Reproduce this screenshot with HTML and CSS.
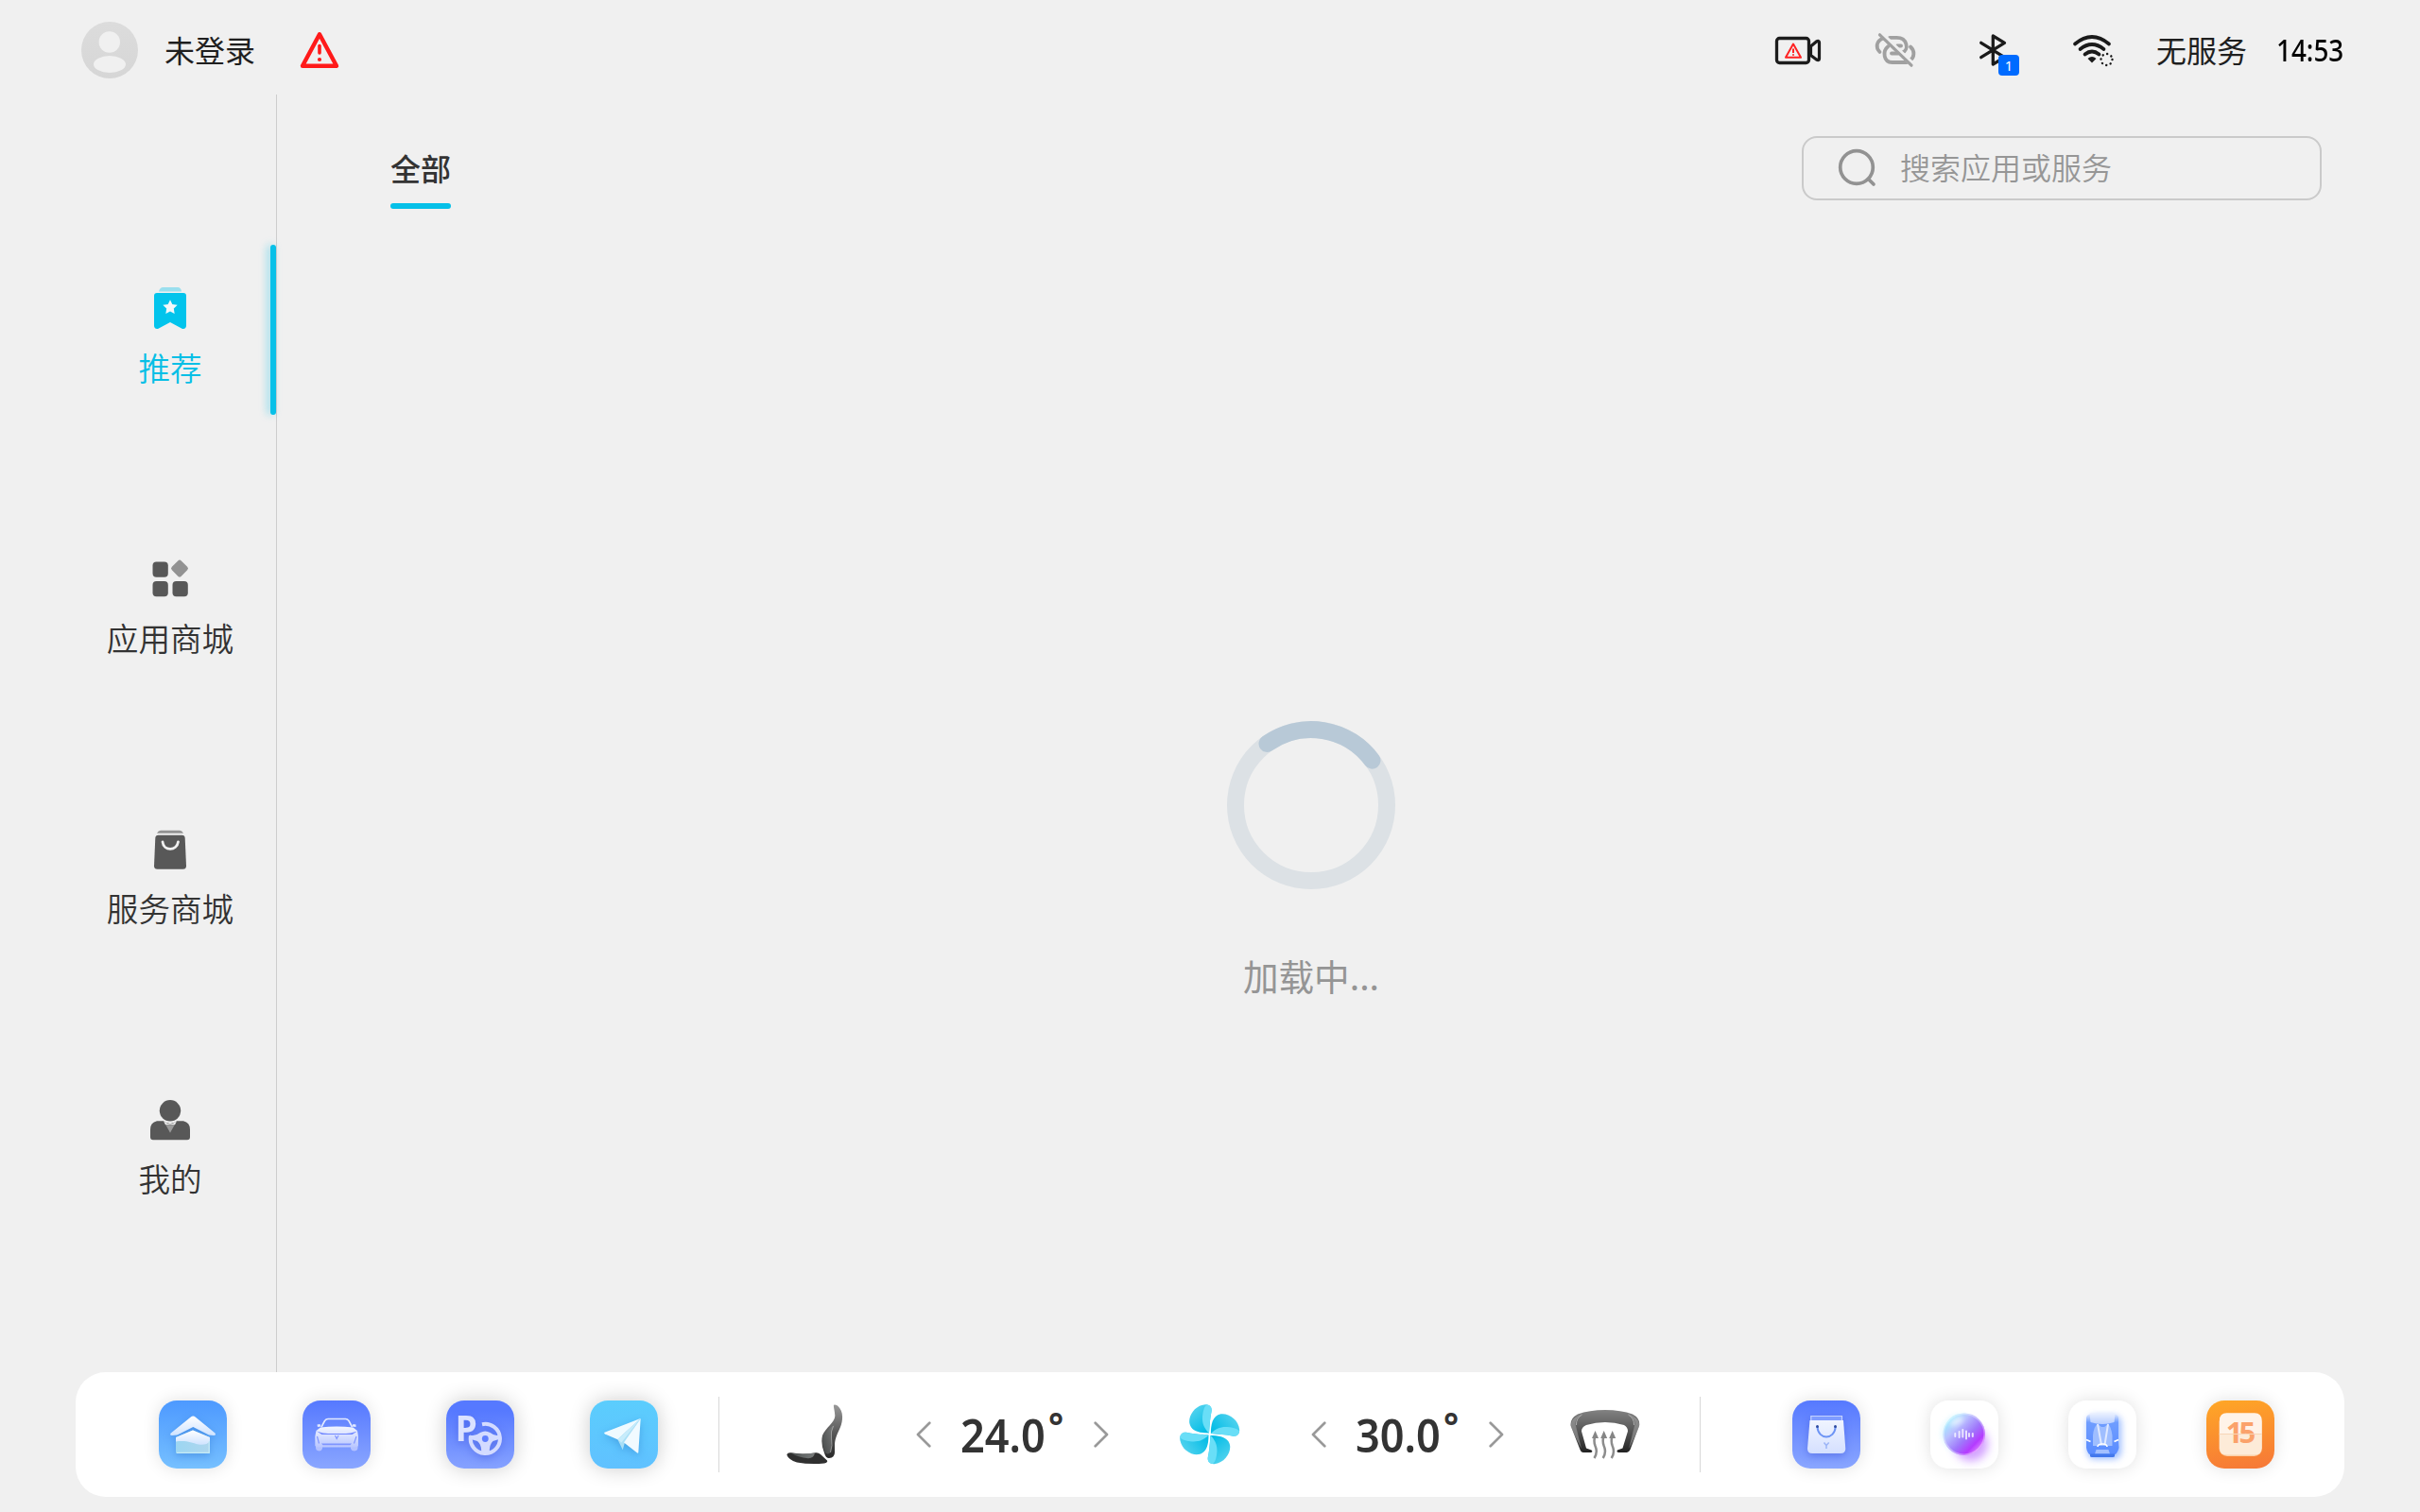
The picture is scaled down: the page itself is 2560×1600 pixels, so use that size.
FILE: index.html
```html
<!DOCTYPE html>
<html lang="zh-CN">
<head>
<meta charset="utf-8">
<title>应用商城</title>
<link rel="stylesheet" href="styles.css">
</head>
<body>
<div class="screen">
  <header class="status-bar">
    <svg class="avatar" viewBox="0 0 60 60">
      <defs><linearGradient id="av" x1="0" y1="0" x2="0" y2="1"><stop offset="0" stop-color="#dcdcdc"/><stop offset="1" stop-color="#d6d6d6"/></linearGradient></defs>
      <circle cx="30" cy="30" r="30" fill="url(#av)"/>
      <circle cx="29.8" cy="21.5" r="11.2" fill="#f0f0f0"/>
      <ellipse cx="30" cy="45" rx="17" ry="9" fill="#f0f0f0"/>
    </svg>
    <span class="login">未登录</span>
    <svg class="alert" viewBox="0 0 42 40">
      <path d="M21 3.2 39 36.8H3Z" fill="none" stroke="#ff1a1a" stroke-width="4.4" stroke-linejoin="round"/>
      <path d="M21 15.500v7.500" stroke="#ff1a1a" stroke-width="3.600" stroke-linecap="round"/>
      <circle cx="21" cy="30" r="2.1" fill="#ff1a1a"/>
    </svg>
    <div class="status-icons">
      <svg class="camera" viewBox="0 0 48 29">
        <rect x="1.5" y="1.5" width="34" height="26" rx="3" fill="none" stroke="#1c1c1c" stroke-width="3.300"/>
        <path d="M37.5 10 43.5 5q2.8-1.5 3 1v17q-.2 2.500-3 1L37.500 19.500Z" fill="none" stroke="#1c1c1c" stroke-width="3.200" stroke-linejoin="round"/>
        <path d="M19 7.500 27 21.800H11Z" fill="none" stroke="#ff2222" stroke-width="2" stroke-linejoin="round"/>
        <path d="M19 12.500v4.500M19 18.300v1.500" stroke="#ff2222" stroke-width="2"/>
      </svg>
      <svg class="link-off" viewBox="0 0 42 36" fill="none" stroke="#a0a0a0" stroke-width="3.800" stroke-linecap="round">
        <path d="M15 4.800H22.500C34 4.800 35.500 18 28.500 20.500"/>
        <path d="M17 21.500H24"/>
        <path d="M8 5.500C.500 8.500 0 15.500 4.500 20"/>
        <path d="M23 13.500H27"/>
        <path d="M13.500 14C7 19 8.500 31 17.500 31H33"/>
        <path d="M37 14.500C42 19 41 25.500 37 28.500"/>
        <path d="M6 1 39 33" stroke="#f0f0f0" stroke-width="5.500"/>
        <path d="M4.500 1.800 38 34.200" stroke-width="3.200"/>
      </svg>
      <div class="bluetooth">
        <svg viewBox="0 0 30 34"><path d="M1.700 9.300 26.500 24.700 14.300 32V2L26.500 9.300 1.700 24.700" fill="none" stroke="#1a1a1a" stroke-width="3.300" stroke-linecap="round" stroke-linejoin="round"/></svg>
        <span class="badge">1</span>
      </div>
      <svg class="wifi" viewBox="0 0 43 33">
        <g fill="none" stroke="#1a1a1a" stroke-width="3.700" stroke-linecap="round">
          <path d="M2 9.500Q20 -5.500 38 9.500"/>
          <path d="M7.500 15Q20 5 32.500 15"/>
          <path d="M12.500 20.500Q20 14.500 27.500 20.500"/>
        </g>
        <path d="M15.500 25Q20 21 24.500 25L20 29.500Z" fill="#1a1a1a"/>
        <circle cx="35.500" cy="26" r="6" fill="none" stroke="#1a1a1a" stroke-width="2.400" stroke-dasharray=".1 4.600" stroke-linecap="round"/>
      </svg>
      <span class="service">无服务</span>
      <span class="clock">14:53</span>
    </div>
  </header>

  <div class="body">
    <nav class="sidebar">
      <div class="nav-item active">
        <svg viewBox="0 0 44 46">
          <path d="M10 5.500Q11 1 14.500 1H30Q33.500 1 34 5.500Z" fill="#9adfee"/>
          <path d="M8 7H36Q39 7 39 10V42Q38.500 45.500 35 45L22 38 9 45Q5.500 45.500 5 42V10Q5 7 8 7Z" fill="#02c4ec"/>
          <path d="M22 14.200 24.300 19 29.700 19.700 25.800 23.500 26.700 29 22 26.500 17.300 29 18.200 23.500 14.300 19.700 19.700 19Z" fill="#f2f8fa"/>
        </svg>
        <span>推荐</span>
      </div>
      <div class="nav-item">
        <svg viewBox="0 0 44 46" fill="#585858">
          <rect x="3.500" y="5.500" width="16.300" height="16.300" rx="4"/>
          <rect x="3.500" y="26" width="16.300" height="16.300" rx="4"/>
          <rect x="24.500" y="26" width="16.300" height="16.300" rx="4"/>
          <rect x="25" y="5.600" width="14" height="14" rx="2.500" fill="#929292" transform="rotate(45 32 12.600)"/>
        </svg>
        <span>应用商城</span>
      </div>
      <div class="nav-item">
        <svg viewBox="0 -1.300 44 46">
          <path d="M8 5.500Q9.500 2.500 12 2.500H32Q34.500 2.500 36 5.500Z" fill="#929292"/>
          <path d="M9.500 7.500H34.500Q37.500 7.500 37.700 10.500L39 40Q39 43.500 35.500 43.500H8.500Q5 43.500 5 40L6.300 10.500Q6.500 7.500 9.500 7.500Z" fill="#585858"/>
          <path d="M14 14.500C15 24.500 29 24.500 30.500 14.500" fill="none" stroke="#f0f0f0" stroke-width="2.800" stroke-linecap="round"/>
        </svg>
        <span>服务商城</span>
      </div>
      <div class="nav-item">
        <svg viewBox="0 -1.300 44 46">
          <circle cx="22" cy="13" r="11.200" fill="#585858"/>
          <path d="M8 24H15Q22 29.500 29 24H36Q43 25.500 43 33V41Q43 44 40 44H4Q1 44 1 41V33Q1 25.500 8 24Z" fill="#585858"/>
          <path d="M15 24Q22 30 29 24L27 28H17Z" fill="#f0f0f0"/>
          <path d="M17 27.500Q22 29 27 27.500L22 36.500Z" fill="#9a9a9a"/>
        </svg>
        <span>我的</span>
      </div>
    </nav>
    <main class="content">
      <div class="toolbar">
        <div class="tab">全部</div>
        <div class="search">
          <svg viewBox="0 0 42 42"><circle cx="20" cy="20" r="17.300" fill="none" stroke="#929292" stroke-width="3.700"/><path d="M32.500 32.500 38 38" stroke="#929292" stroke-width="3.700" stroke-linecap="round"/></svg>
          <span>搜索应用或服务</span>
        </div>
      </div>
      <div class="loading">
        <svg viewBox="0 0 178 178" fill="none" stroke-width="18">
          <circle cx="89" cy="89" r="80" stroke="#dce1e5"/>
          <path d="M42.500 23.900A80 80 0 0 1 153.500 41.700" stroke="#b8c9d7" stroke-linecap="round"/>
        </svg>
        <span>加载中...</span>
      </div>
    </main>
  </div>

  <footer class="dock">
    <div class="apps apps-left">
      <svg class="app home" viewBox="0 0 72 72">
        <defs>
          <linearGradient id="roof" x1="0" y1="0" x2="0" y2="1"><stop offset="0" stop-color="#fff"/><stop offset="1" stop-color="#cfe3ff"/></linearGradient>
          <linearGradient id="water" x1="0" y1="0" x2="1" y2="0"><stop offset="0" stop-color="#9cd6f2"/><stop offset="1" stop-color="#aed6ee"/></linearGradient>
        </defs>
        <g class="lift-blue">
          <path d="M36.300 16.500Q37.500 16.500 39 17.800L59.500 34.500Q61 37 58 37L53 36.500 36.300 28 19.500 36.500 14 37Q11 37 12.800 34.500L33.500 17.800Q35 16.500 36.300 16.500Z" fill="url(#roof)"/>
          <path d="M18 39 36 31.500 54 39V55Q54 56 53 56H19Q18 56 18 55Z" fill="url(#water)"/>
          <path d="M18 39 36 31.500 54 39V43Q50 48 42 46.500C34 45 30 42 18 43.500Z" fill="url(#roof)"/>
          <path d="M19 55.300H53.200V43" fill="none" stroke="#c6ecf7" stroke-width="1.200"/>
        </g>
      </svg>
      <svg class="app car" viewBox="0 0 72 72">
        <defs><linearGradient id="carb" x1="0" y1="0" x2="0" y2="1"><stop offset="0" stop-color="#f2f5ff"/><stop offset=".6" stop-color="#cfd9ff"/><stop offset="1" stop-color="#b9c6ff"/></linearGradient></defs>
        <path d="M14 47H21V51Q20 53.500 17.500 53.500 14 53 14 50ZM51 47H58.500V50Q58.500 53 55 53.500 52 53.500 51 51Z" fill="#b3c1ff"/>
        <path d="M20 28 23.500 21.500Q25 19.500 27 19.500H45.500Q47.500 19.500 49 21.500L52.500 28" fill="none" stroke="#e3eaff" stroke-width="1.600"/>
        <path d="M15.500 25.500 18.500 25 19.500 27.500 16 28ZM56.500 25.500 53.500 25 52.500 27.500 56.500 28Z" fill="#e3eaff"/>
        <path d="M19 28.500Q36 26.500 53.500 28.500L58 32 59 38V47.500Q58.500 49.500 56 49.500H16Q13.500 49.500 13.300 47.500V38L14.500 32Z" fill="url(#carb)"/>
        <path d="M15 32.500 21.500 34.500 27 35H46L51 34.500 58 32.500 52.500 36H20.500Z" fill="#6f86ff"/>
        <path d="M20 45.500H52L50.500 47.300H21.500Z" fill="#7f95ff"/>
        <path d="M15.500 38 17.500 45.500M57 38 54.500 45.500M34.500 37 36.200 40.500 38 37" fill="none" stroke="#8095ff" stroke-width="1.200"/>
      </svg>
      <svg class="app parking" viewBox="0 0 72 72">
        <g class="lift-indigo">
          <text x="9.800" y="43" class="park-letter">P</text>
          <path d="M38 25.200A15.600 15.600 0 1 1 26 37.500" fill="none" stroke="#d3dbff" stroke-width="4"/>
          <path d="M25 36.500Q30 38.500 36 34 41.300 31 46.500 34 52 38.500 57.500 36V40.500L49.500 43Q45 47 46 56H37Q38 47 33 43L26 41Z" fill="#d3dbff"/>
          <circle cx="41.300" cy="40.500" r="3.400" fill="#5f7fff"/>
        </g>
      </svg>
      <svg class="app send" viewBox="0 0 72 72">
        <g class="lift-blue">
          <path d="M29.300 41 53.500 19 37 44.500 34.700 52.300Z" fill="#a9dff6"/>
          <path d="M15.500 33.800Q14.500 34.800 16 35.500L29.300 41.300 53.500 19Z" fill="#effaff"/>
          <path d="M36 44.500 53.700 19 51.300 55Q51 56.300 49.800 55.300Z" fill="#f1faff"/>
          <path d="M29.300 41.300 53.500 19 33.500 44.500Z" fill="#c7ecfb"/>
        </g>
      </svg>
    </div>

    <div class="climate">
      <svg class="seat" viewBox="0 0 60 64">
        <defs>
          <linearGradient id="back" x1="0" y1="0" x2="0" y2="1"><stop offset="0" stop-color="#999"/><stop offset=".5" stop-color="#5c5c5c"/><stop offset="1" stop-color="#282828"/></linearGradient>
          <linearGradient id="cush" x1="0" y1="0" x2="1" y2="0"><stop offset="0" stop-color="#555a5a"/><stop offset="1" stop-color="#8a8e8e"/></linearGradient>
        </defs>
        <path d="M50 .800Q51 -.300 54 1.500C58.500 5.500 60 11 58.500 19 57 27 51.500 33 51 42V51Q51 56.500 45 57 41.500 57 40 51.500 36 42 38 33C41 25 51.500 19 51.300 12 51 6 49.500 3 50 .800Z" fill="url(#back)"/>
        <path d="M50.500 22Q47 28 47.500 34 48.500 42 47 50 45 54 41 51.500 36.500 42 38.500 34 41 28 50.500 22Z" fill="url(#cush)" opacity=".55"/>
        <path d="M49.500 23Q46.500 29 47.500 35 49 44 46.500 51" fill="none" stroke="#b5b5b5" stroke-width=".7"/>
        <path d="M.300 53.500Q1 51 4.500 51.300 17 53.500 31 51.200 34 51 36 53L43 59.500Q44 61.500 40 62.500 25 64 11 61.500 2 58.500 .300 53.500Z" fill="#303030"/>
        <path d="M4.500 51.500Q17 53.500 30 51.500 29 57 23 57.300 12 56 4.500 51.500Z" fill="url(#cush)" opacity=".8"/>
      </svg>
      <div class="temp">
        <svg class="chev" viewBox="0 0 16 28"><path d="M14.300 1.700 2 14 14.300 26.300" fill="none" stroke="#999" stroke-width="2.700" stroke-linecap="round" stroke-linejoin="round"/></svg>
        <span class="value"><b>24.0</b><i>°</i></span>
        <svg class="chev" viewBox="0 0 16 28"><path d="M1.700 1.700 14 14 1.700 26.300" fill="none" stroke="#999" stroke-width="2.700" stroke-linecap="round" stroke-linejoin="round"/></svg>
      </div>
      <svg class="fan" viewBox="0 0 64 64">
        <defs>
          <linearGradient id="bl" x1="0" y1="0" x2=".6" y2="1"><stop offset="0" stop-color="#62d7f0"/><stop offset="1" stop-color="#05bde6"/></linearGradient>
          <g id="blade">
            <path d="M31 30.500C22 30.500 12 29 10.300 20 9 12 16 1 27 .200 32 0 34.500 3.500 33.500 8 32 15 31.500 22 31 30.500Z" fill="url(#bl)"/>
            <path d="M31 30.500C26 26 23.500 20 24 13 24.500 7 26 2 28.500 .400 32.500 .500 34.500 3.500 33.500 8 32 15 31.500 22 31 30.500Z" fill="#69def7"/>
          </g>
        </defs>
        <use href="#blade"/>
        <use href="#blade" transform="rotate(90 31.700 31.700)"/>
        <use href="#blade" transform="rotate(180 31.700 31.700)"/>
        <use href="#blade" transform="rotate(270 31.700 31.700)"/>
      </svg>
      <div class="temp">
        <svg class="chev" viewBox="0 0 16 28"><path d="M14.300 1.700 2 14 14.300 26.300" fill="none" stroke="#999" stroke-width="2.700" stroke-linecap="round" stroke-linejoin="round"/></svg>
        <span class="value"><b>30.0</b><i>°</i></span>
        <svg class="chev" viewBox="0 0 16 28"><path d="M1.700 1.700 14 14 1.700 26.300" fill="none" stroke="#999" stroke-width="2.700" stroke-linecap="round" stroke-linejoin="round"/></svg>
      </div>
      <svg class="defrost" viewBox="0 0 74 52">
        <defs><linearGradient id="df" x1="0" y1="0" x2="0" y2="1"><stop offset="0" stop-color="#828282"/><stop offset=".5" stop-color="#555"/><stop offset="1" stop-color="#222"/></linearGradient></defs>
        <path d="M37 0Q54 0 66 4.500 74.500 9 73 17L63.500 42Q62 45 60 45H51Q48.500 44.500 50 42.500L55.500 40.500 61 22.500Q61 18 57 16 47 13 37 13 27 13 17 16 12 18 12 22.500L17 40.500 22.500 42.500Q24.500 44.500 22 45H14Q11.500 45 10.500 42L.700 17Q-.500 9 8 4.500 20 0 37 0Z" fill="url(#df)"/>
        <path d="M13 4Q5 9 5.500 15L12 41Q3 24 .700 17-.500 9 13 4ZM61 4Q69 9 68.500 15L62 41Q71 24 73 17 74.500 9 61 4Z" fill="#a5a5a5" opacity=".55"/>
        <path d="M12.500 5Q6 9 6.500 16M61.500 5Q68 9 67.500 16" fill="none" stroke="#bbb" stroke-width=".8"/>
        <g fill="none" stroke="#8c8c8c" stroke-width="2.500">
          <path d="M26.500 27Q24.500 33 26.500 38 29.500 45 25.500 51"/>
          <path d="M35.700 27Q33.700 33 35.700 38 38.700 45 34.700 51"/>
          <path d="M44.700 27Q42.700 33 44.700 38 47.700 45 43.700 51"/>
        </g>
        <path d="M26.500 22 30 30H23ZM35.700 22 39.200 30H32.200ZM44.700 22 48.200 30H41.200Z" fill="#858585"/>
      </svg>
    </div>

    <div class="apps apps-right">
      <svg class="app bag" viewBox="0 0 72 72">
        <defs><linearGradient id="bg" x1="0" y1="0" x2="0" y2="1"><stop offset="0" stop-color="#f0f4ff"/><stop offset="1" stop-color="#d5e0ff"/></linearGradient></defs>
        <g class="lift-indigo">
          <path d="M19.300 16H53V22H19.300Z" fill="#7f9cff"/>
          <path d="M19.800 21V16.500H52.500V21" fill="none" stroke="#c4d2ff" stroke-width="1.200"/>
          <path d="M18.500 21H54L56.300 51Q56.300 56 51 56H21Q16 56 16 51Z" fill="url(#bg)"/>
        </g>
        <path d="M26.500 28C27.500 42 44.500 42 45.700 28" fill="none" stroke="#6d94f5" stroke-width="2"/>
        <circle cx="26.500" cy="27.500" r="1.500" fill="#2e4ba0"/><circle cx="45.500" cy="27.500" r="1.500" fill="#2e4ba0"/>
        <path d="M33.500 44.500 36 47.500 38.700 44.500M36 47.500V51" fill="none" stroke="#9bb4f7" stroke-width="1.500"/>
      </svg>
      <svg class="app orb" viewBox="0 0 72 72">
        <defs>
          <linearGradient id="ob" x1=".08" y1=".2" x2=".8" y2=".9"><stop offset="0" stop-color="#a5efff"/><stop offset=".28" stop-color="#b9c0ff"/><stop offset=".6" stop-color="#9f78fb"/><stop offset=".85" stop-color="#b43bff"/><stop offset="1" stop-color="#d678ff"/></linearGradient>
          <filter id="soft" x="-50%" y="-50%" width="200%" height="200%"><feGaussianBlur stdDeviation="5"/></filter>
          <filter id="soft2" x="-50%" y="-50%" width="200%" height="200%"><feGaussianBlur stdDeviation="2.500"/></filter>
        </defs>
        <circle cx="43" cy="46" r="18" fill="#c583ff" opacity=".75" filter="url(#soft)"/>
        <circle cx="32" cy="35" r="21" fill="#d5f5ff" opacity=".6" filter="url(#soft2)"/>
        <circle cx="35.700" cy="35.700" r="22.300" fill="url(#ob)"/>
        <circle cx="35.700" cy="35.700" r="21.500" fill="none" stroke="#fff" stroke-opacity=".35" stroke-width="1.500"/>
        <ellipse cx="28" cy="22" rx="8" ry="3.500" fill="#fff" opacity=".65" filter="url(#soft2)" transform="rotate(-30 28 22)"/>
        <path d="M26.300 35v3M30.600 33v6M34.300 31v7.500M38 32.500v8M41 35v3M44.800 35v3" stroke="#fff" stroke-opacity=".75" stroke-width="2" stroke-linecap="round"/>
      </svg>
      <svg class="app chair" viewBox="0 0 72 72">
        <defs>
          <filter id="soft3" x="-50%" y="-50%" width="200%" height="200%"><feGaussianBlur stdDeviation="3.500"/></filter>
          <linearGradient id="ch" x1="0" y1="0" x2="0" y2="1"><stop offset="0" stop-color="#dfe9ff"/><stop offset=".2" stop-color="#6f9dff"/><stop offset="1" stop-color="#5a8cff"/></linearGradient>
        </defs>
        <rect x="20" y="16" width="36" height="46" rx="8" fill="#8fb4ff" opacity=".85" filter="url(#soft3)"/>
        <path d="M19 19Q19 15 23 14.500H49Q53 15 53 19V43L53.500 50Q52 57 47 58H25Q20 57 19 50Z" fill="url(#ch)"/>
        <path d="M22.500 14Q23 12.500 26 13H46Q49 12.500 49.500 14L48.500 23Q36 27 23.500 23Z" fill="#e9f0ff" opacity=".65"/>
        <path d="M26 48V37Q27 27 31 25L35 28H38L42 25Q45 27 46.500 37V48Z" fill="#9fbeff"/>
        <path d="M31 25 35 47M42 25 38.500 47" stroke="#dfe9ff" stroke-width="2"/>
        <path d="M31 49Q31 46 36 46 41 46 41 49" fill="none" stroke="#fff" stroke-width="1.600"/>
        <path d="M29.500 52H42.500L44 56.500H28Z" fill="#a3c0ff"/>
        <path d="M19 41.500 23.500 43.500M53 41.500 48.500 43.500" stroke="#fff" stroke-width="1.800"/>
        <path d="M23 56.500H49V58.500Q49 60 47 60H25Q23 60 23 58.500Z" fill="#4378ec"/>
      </svg>
      <svg class="app calendar" viewBox="0 0 72 72">
        <rect x="13.500" y="14" width="45.500" height="45" rx="8.500" fill="#fbd0a8"/>
        <path d="M14 21Q14 13.300 21.500 13.300H51Q58.500 13.300 58.500 21V35.500H14Z" fill="#fff3e8"/>
        <path d="M14 35.500H58.500V50Q58.500 57.500 51 57.500H21.500Q14 57.500 14 50Z" fill="#fdebd8"/>
        <text x="34.500" y="45" class="cal-day">15</text>
        <path d="M13.500 35.500H59" stroke="#f7d5b8" stroke-width="1.200"/>
      </svg>
    </div>
  </footer>
</div>
</body>
</html>
```
FILE: styles.css
```css
* { box-sizing: border-box; }
body {
  margin: 0;
  background: #f0f0f0;
  font-family: "Noto Sans CJK SC", "Noto Sans", sans-serif;
  color: #1f1f1f;
}
svg { display: block; flex: none; overflow: visible; }
.screen {
  width: 2560px;
  height: 1600px;
  display: flex;
  flex-direction: column;
  overflow: hidden;
}

/* Status bar */
.status-bar {
  height: 100px;
  padding: 6px 80px 0 86px;
  display: flex;
  align-items: center;
  font-size: 32px;
  line-height: 48px;
}
.avatar { width: 60px; height: 60px; }
.login { margin-left: 28px; padding-bottom: 3px; }
.alert { width: 42px; height: 40px; margin-left: 47px; }
.status-icons { display: flex; align-items: center; margin-left: auto; }
.camera { width: 48px; height: 29px; }
.link-off { width: 42px; height: 36px; margin-left: 58px; }
.bluetooth { position: relative; width: 42px; height: 34px; margin-left: 68px; }
.bluetooth svg { width: 30px; height: 34px; }
.badge {
  position: absolute;
  left: 20px;
  top: 22px;
  width: 22px;
  height: 22px;
  border-radius: 4px;
  background: #006bff;
  color: #fff;
  font: 15px/22px "Noto Sans", sans-serif;
  text-align: center;
}
.wifi { width: 43px; height: 33px; margin-left: 57px; }
.service { margin-left: 45px; padding-bottom: 3px; }
.clock {
  width: 72px;
  margin-left: 31px;
  color: #000;
  font-family: "Noto Sans", sans-serif;
  font-weight: 500;
  white-space: nowrap;
  transform: scaleX(.87);
  transform-origin: 0 50%;
}

/* Page body */
.body { height: 1352px; display: flex; }
.sidebar {
  width: 293px;
  padding: 159px 0 0 68px;
  border-right: 1px solid #cdcdcd;
  display: flex;
  flex-direction: column;
  gap: 106px;
}
.nav-item {
  height: 180px;
  display: flex;
  flex-direction: column;
  align-items: center;
  padding-top: 44px;
  font-size: 33.6px;
  line-height: 50px;
  font-weight: 350;
  color: #333;
}
.nav-item svg { width: 44px; height: 46px; margin-bottom: 15px; }
.active {
  color: #06bfe6;
  position: relative;
}
.active::after {
  content: "";
  position: absolute;
  top: 0;
  right: 0;
  width: 6px;
  height: 180px;
  border-radius: 3px;
  background: #06c0e8;
  box-shadow: -3px 0 8px rgba(6, 192, 232, .4);
}
.content { flex: 1; display: flex; flex-direction: column; }
.toolbar {
  display: flex;
  justify-content: space-between;
  align-items: flex-start;
  padding: 44px 104px 0 120px;
}
.tab {
  height: 77px;
  padding-top: 9px;
  font-size: 32px;
  line-height: 48px;
  font-weight: 500;
  color: #333;
}
.tab::after {
  content: "";
  display: block;
  height: 6px;
  margin-top: 14px;
  border-radius: 3px;
  background: #06c0e8;
}
.search {
  width: 550px;
  height: 68px;
  border: 2px solid #cacaca;
  border-radius: 16px;
  display: flex;
  align-items: center;
  padding-left: 36px;
  color: #969696;
  font-size: 32px;
  font-weight: 350;
}
.search svg { width: 42px; height: 42px; }
.search span { margin-left: 24px; padding-bottom: 4px; }
.loading {
  display: flex;
  flex-direction: column;
  align-items: center;
  padding: 542px 79px 0 0;
  font-size: 37.6px;
  line-height: 56px;
  color: #959595;
}
.loading svg { width: 178px; height: 178px; margin-bottom: 63px; }

/* Dock */
.dock {
  width: 2400px;
  height: 132px;
  margin-left: 80px;
  border-radius: 32px;
  background: #fff;
  display: grid;
  grid-template-columns: 680px 1039px 681px;
  align-items: center;
}
.apps { display: flex; }
.apps-left { gap: 80px; padding-left: 88px; }
.apps-right { gap: 74px; padding-left: 97px; }
.app {
  width: 72px;
  height: 72px;
  border-radius: 19px;
  box-shadow: 0 0 18px rgba(0, 0, 0, .12);
}
.home { background: linear-gradient(#4d99ff, #76c0ff); }
.car, .bag { background: linear-gradient(#5679ff, #8aa6ff); }
.parking { background: linear-gradient(#5679ff 15%, #86a2ff); box-shadow: 0 0 22px rgba(0, 0, 0, .2); }
.send { background: linear-gradient(#5bcdfd, #60c1ff); box-shadow: 0 0 22px rgba(0, 0, 0, .2); }
.orb, .chair { background: #fff; }
.calendar { background: linear-gradient(170deg, #ffa726, #f67738); }
.lift-blue { filter: drop-shadow(0 3px 4px rgba(20, 90, 180, .3)); }
.lift-indigo { filter: drop-shadow(0 3px 4px rgba(40, 60, 200, .35)); }
.park-letter { font: 700 37px "Noto Sans", sans-serif; fill: #dbe2ff; }
.cal-day { font: 700 31px "Noto Sans", sans-serif; fill: #fba26b; text-anchor: middle; letter-spacing: -4px; }
.climate {
  height: 80px;
  display: flex;
  align-items: center;
  border-left: 1px solid #d8d8d8;
  border-right: 1px solid #d8d8d8;
}
.seat { width: 60px; height: 64px; margin-left: 71px; }
.temp {
  width: 204px;
  display: flex;
  align-items: center;
  justify-content: space-between;
}
.seat + .temp { margin-left: 77px; }
.fan { width: 64px; height: 64px; margin-left: 75px; }
.fan + .temp { margin-left: 75px; }
.defrost { width: 74px; height: 52px; margin-left: 70px; }
.chev { width: 16px; height: 28px; }
.value {
  width: 110px;
  display: flex;
  font: 48.5px/64px "Noto Sans", sans-serif;
  color: #333;
}
.value b { font-weight: 600; width: 93px; transform: scaleX(.93); transform-origin: 0 50%; white-space: nowrap; }
.value i { font-style: normal; font-weight: 700; font-size: 38px; line-height: 44px; }
```
